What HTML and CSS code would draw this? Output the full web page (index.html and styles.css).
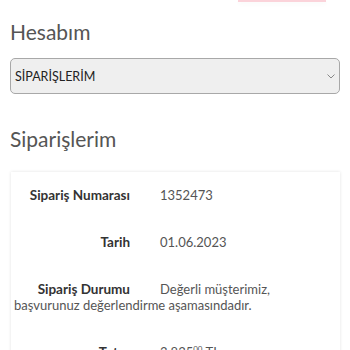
FILE: index.html
```html
<!DOCTYPE html>
<html lang="tr">
<head>
<meta charset="utf-8">
<link rel="stylesheet" href="styles.css">
</head>
<body>
<div class="topbar"><div class="topbtn"></div></div>
<h1 class="title">Hesabım</h1>
<div class="select">
  <span class="select-text">SİPARİŞLERİM</span>
  <svg class="chev" width="8" height="5" viewBox="0 0 8 5"><path d="M0.5 0.5 L4 4 L7.5 0.5" fill="none" stroke="#888" stroke-width="1"/></svg>
</div>
<h2 class="title title2">Siparişlerim</h2>
<div class="card">
  <div class="row"><span class="label">Sipariş Numarası</span><span class="value">1352473</span></div>
  <div class="row"><span class="label">Tarih</span><span class="value">01.06.2023</span></div>
  <div class="row"><span class="label">Sipariş Durumu</span><span class="value">Değerli müşterimiz, başvurunuz değerlendirme aşamasındadır.</span></div>
  <div class="row"><span class="label">Tutar</span><span class="value">3.835<sup>00</sup> TL</span></div>
</div>
</body>
</html>
```
FILE: styles.css
```css
html, body {
  margin: 0;
  padding: 0;
  background: #fff;
  overflow: hidden;
}
body {
  padding: 0 10px;
  font-family: Lato, "Open Sans", sans-serif;
  color: #555;
}
.topbar {
  display: flex;
  justify-content: flex-end;
  height: 2px;
  padding-right: 14px;
}
.topbtn {
  width: 88px;
  height: 2px;
  background: #fbd3da;
  box-shadow: 0 2px 4px rgba(0,0,0,0.04);
}
.title {
  margin: 0;
  font-weight: 400;
  font-size: 21px;
  line-height: 26px;
  color: #555;
  padding-top: 17px;
}
.title2 {
  padding-top: 32px;
}
.select {
  margin-top: 13px;
  height: 34px;
  border: 1px solid #a8a8a8;
  border-radius: 5px;
  background: #efefef;
  display: flex;
  align-items: center;
  justify-content: space-between;
  padding: 0 4px 0 4px;
}
.select-text {
  font-size: 12.5px;
  color: #222;
}
.chev {
  display: block;
}
.card {
  margin: 20px 0 0 1px;
  box-shadow: 0 0 3px rgba(0,0,0,0.12);
  padding: 0 4px 0 3px;
}
.row {
  padding: 15px 0 16px;
  font-size: 13px;
  line-height: 16px;
}
.label {
  display: inline-block;
  width: 116px;
  text-align: right;
  font-weight: 700;
  font-size: 13.5px;
  color: #333;
  margin-right: 30px;
}
.value {
  color: #555;
}
sup {
  font-size: 8px;
  line-height: 0;
}
```
